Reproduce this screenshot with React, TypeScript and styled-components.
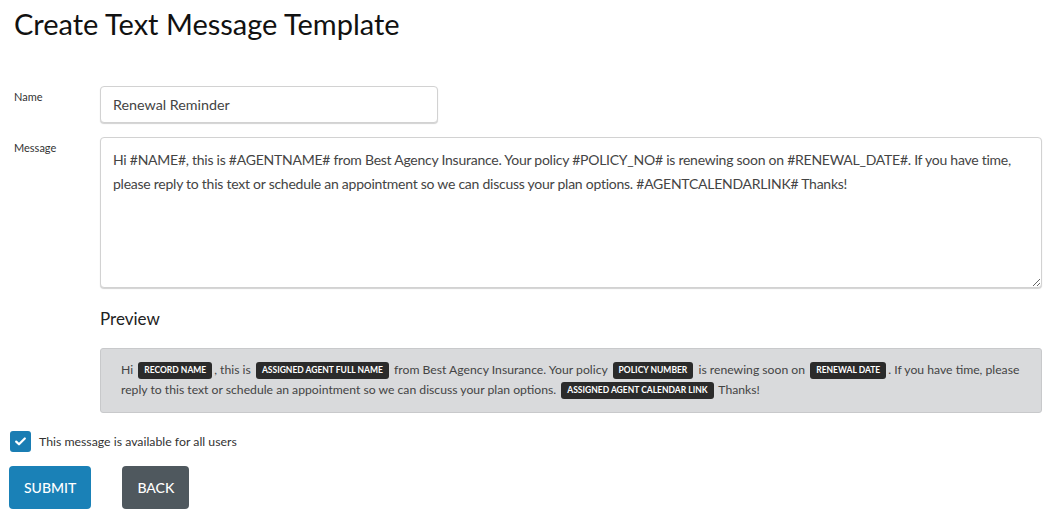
import React from 'react';
import styled, { createGlobalStyle } from 'styled-components';

const GlobalStyle = createGlobalStyle`
  body {
    margin: 0;
    background: #fff;
    font-family: Lato, "Open Sans", sans-serif;
    color: #333;
  }
`;

const Page = styled.div`
  padding: 6px 14px 10px 9px;
`;

const Title = styled.h1`
  margin: 0 0 0 5px;
  font-size: 29px;
  font-weight: 400;
  color: #111;
  line-height: 36px;
`;

const Form = styled.div`
  margin-top: 44px;
  display: flex;
  flex-direction: column;
  gap: 14px;
`;

const Row = styled.div`
  display: flex;
  align-items: flex-start;
`;

const Label = styled.label`
  width: 91px;
  padding-left: 5px;
  padding-top: 4px;
  font-size: 11px;
  color: #333;
  box-sizing: border-box;
  flex-shrink: 0;
`;

const Field = styled.div`
  flex: 1;
  display: flex;
  flex-direction: column;
`;

const Input = styled.input`
  width: 338px;
  height: 37px;
  box-sizing: border-box;
  border: 1px solid #d2d2d2;
  border-radius: 4px;
  box-shadow: 0 1px 1px rgba(0, 0, 0, 0.18);
  padding: 0 12px;
  font-family: inherit;
  font-size: 14.3px;
  color: #444;
  outline: none;
`;

const TextArea = styled.textarea`
  width: 100%;
  height: 151px;
  box-sizing: border-box;
  border: 1px solid #d2d2d2;
  border-radius: 4px;
  box-shadow: 0 1px 1px rgba(0, 0, 0, 0.18);
  padding: 10px 12px;
  font-family: inherit;
  font-size: 14px;
  letter-spacing: -0.25px;
  line-height: 24px;
  color: #444;
  outline: none;
  resize: vertical;
  display: block;
`;

const PreviewHeading = styled.h2`
  margin: 20px 0 18px;
  font-size: 17px;
  font-weight: 400;
  color: #222;
  line-height: 22px;
`;

const PreviewBox = styled.div`
  background: #d9dadc;
  border: 1px solid #c8c9cb;
  border-radius: 3px;
  padding: 11px 20px 12px;
  font-size: 12.2px;
  line-height: 20px;
  color: #444;
`;

const Tag = styled.span`
  display: inline-block;
  background: #2b2b2b;
  color: #fff;
  font-size: 8.5px;
  font-weight: 700;
  text-transform: uppercase;
  border-radius: 3px;
  padding: 0 6px;
  line-height: 17px;
  margin: 0 2px;
  vertical-align: 1px;
`;

const CheckRow = styled.label`
  display: flex;
  align-items: center;
  gap: 8px;
  margin-top: 18px;
  margin-left: 1px;
  font-size: 12.3px;
  color: #333;
`;

const Box = styled.span`
  width: 21px;
  height: 21px;
  border-radius: 3px;
  background: #1a7db3;
  display: flex;
  align-items: center;
  justify-content: center;
`;

const Buttons = styled.div`
  display: flex;
  gap: 31px;
  margin-top: 14px;
`;

const Button = styled.button<{ $tone: 'primary' | 'dark' }>`
  height: 43px;
  padding: 0 15px;
  border: none;
  border-radius: 4px;
  background: ${p => (p.$tone === 'primary' ? '#1a81b7' : '#4f585e')};
  color: #fff;
  font-family: inherit;
  font-size: 14px;
  font-weight: 500;
  text-transform: uppercase;
  cursor: pointer;
`;

const Check = () => (
  <svg width="11" height="9" viewBox="0 0 11 9">
    <path d="M1.2 4.6 L4 7.3 L9.8 1.5" stroke="#fff" strokeWidth="2.2" fill="none" strokeLinecap="round" strokeLinejoin="round" />
  </svg>
);

const message =
  'Hi #NAME#, this is #AGENTNAME# from Best Agency Insurance. Your policy #POLICY_NO# is renewing soon on #RENEWAL_DATE#. If you have time, please reply to this text or schedule an appointment so we can discuss your plan options. #AGENTCALENDARLINK# Thanks!';

export default function App() {
  return (
    <>
      <GlobalStyle />
      <Page>
        <Title>Create Text Message Template</Title>
        <Form>
          <Row>
            <Label>Name</Label>
            <Field>
              <Input defaultValue="Renewal Reminder" />
            </Field>
          </Row>
          <Row>
            <Label>Message</Label>
            <Field>
              <TextArea defaultValue={message} />
              <PreviewHeading>Preview</PreviewHeading>
              <PreviewBox>
                Hi <Tag>Record Name</Tag>, this is <Tag>Assigned Agent Full Name</Tag> from Best Agency
                Insurance. Your policy <Tag>Policy Number</Tag> is renewing soon on <Tag>Renewal Date</Tag>.
                If you have time, please reply to this text or schedule an appointment so we can discuss your
                plan options. <Tag>Assigned Agent Calendar Link</Tag> Thanks!
              </PreviewBox>
            </Field>
          </Row>
        </Form>
        <CheckRow>
          <Box>
            <Check />
          </Box>
          This message is available for all users
        </CheckRow>
        <Buttons>
          <Button $tone="primary">Submit</Button>
          <Button $tone="dark">Back</Button>
        </Buttons>
      </Page>
    </>
  );
}
